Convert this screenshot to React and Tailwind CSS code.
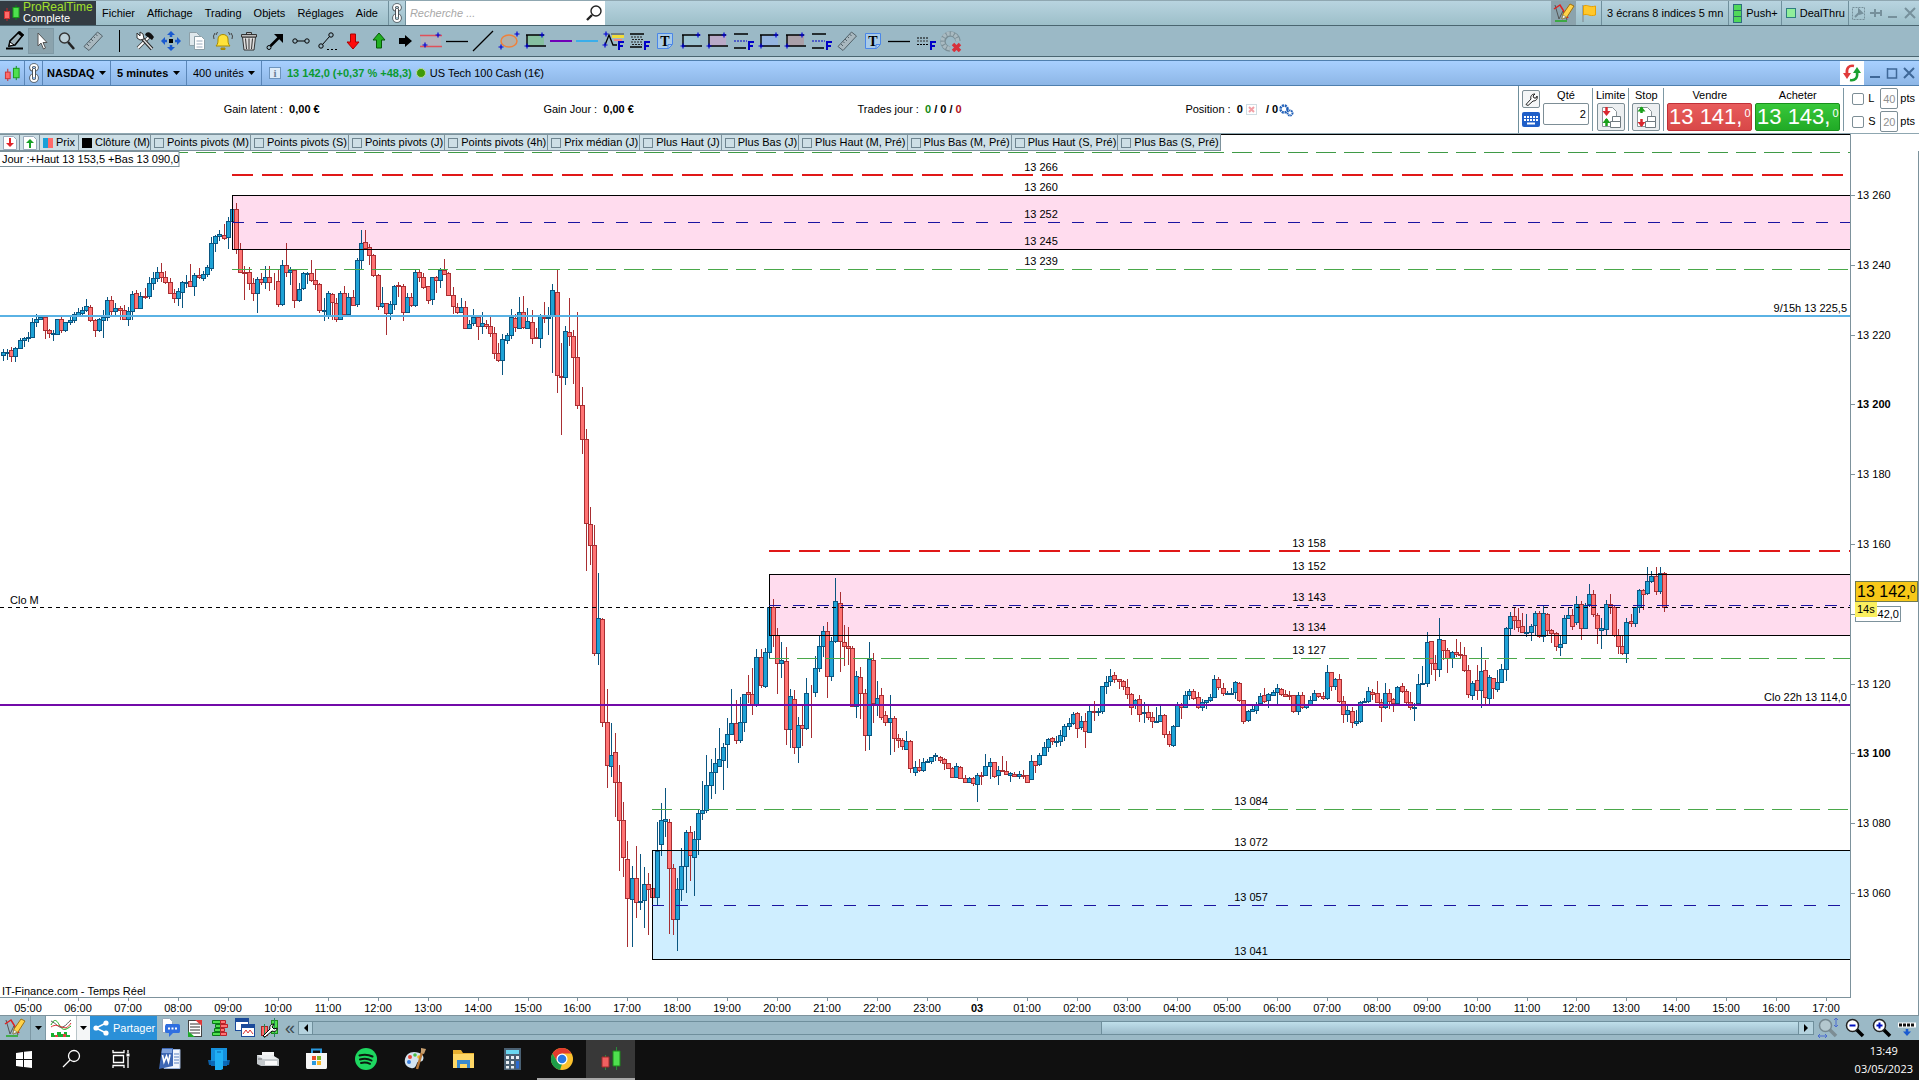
import React, { useState } from "react";

/* ---------- chart data ---------- */

// Each block: y origin, units per pixel, then rows of [high, open, close, low]
const BLOCKS = [
  {
    base: 180,
    unit: 3,
    rows: [
      [508,524,516,542],[508,518,516,540],[500,511,529,545],[502,529,505,545],[474,505,481,508],[470,481,474,500],
      [455,473,470,485],[415,472,427,474],[402,427,418,440],[408,418,411,420],[408,411,451,476],[448,451,460,475],
      [450,461,459,482],[418,463,418,464],[410,418,451,458],[425,449,427,455],[405,427,420,435],[397,421,402,430],
      [385,404,397,410],[380,398,391,405],[357,390,379,395],[375,381,421,425],[418,421,451,470],[415,451,418,455],
      [391,421,411,473],[352,411,361,424],[348,361,394,404],[370,394,385,405],[379,385,391,420],[376,391,418,420],
      [381,418,394,437],[334,394,343,420],[331,340,385,388],[337,384,349,386],[324,348,350,358],[291,349,310,357],
      [276,310,295,330],[261,295,277,305],[249,277,292,305],[274,292,307,312],[295,307,338,341],[326,338,355,368],
      [324,355,334,379],[303,335,307,384],[285,309,305,324],[252,304,319,322],[280,317,286,348],[265,286,292,297],
      [274,295,283,302],[255,283,262,290],[172,265,190,273],[165,188,169,215],[150,169,163,184],[133,166,175,181],
      [110,172,124,207],[88,124,88,208],[69,88,208,221],[189,208,277,280],[258,275,278,359],[261,277,310,330],
      [295,310,340,363],[292,340,298,398],[280,298,307,315],[258,307,292,327],[259,292,307,332],[280,304,303,330],
      [270,304,373,380],[239,373,256,378],[189,256,277,290],[262,277,271,316],[268,271,361,384],[310,361,328,365],
      [277,325,280,330],[277,282,280,312],[240,280,301,305],[268,300,313,330],[310,313,391,400],[355,392,390,423],
      [334,404,340,417],[340,343,367,420],[355,370,418,425],[332,417,340,420],[318,340,403,410],[340,403,352,405],
      [330,352,376,379],[235,373,241,380],[150,241,190,267],[150,187,205,207],[192,202,226,256],[222,226,286,290],
      [283,286,379,390],[321,379,370,385],[369,370,400,465],[363,400,373,419],[315,373,318,390],[305,316,319,350],
      [312,319,397,423],[340,397,352,400],[340,352,376,382],[268,376,277,382],[267,277,291,306],[280,291,322,326],
      [318,319,361,373],[290,358,292,375],[289,292,301,340],[265,301,271,323],[237,271,281,286],[276,280,346,348],
      [321,346,379,402],[370,381,397,403],[354,397,382,400],[363,382,445,448],[420,445,433,448],[388,430,411,437],
      [406,411,439,480],[396,439,430,462],[420,433,439,448],[409,439,460,470],[440,460,520,537],[489,520,539,545],
      [461,541,478,584],[460,481,466,492],[388,466,411,476],[403,413,442,456],[351,445,397,448],[348,397,442,448],
      [384,443,424,444],[390,427,473,491],[445,472,475,478],[403,475,408,503],[366,410,414,428],[380,413,411,465],
    ],
  },
  {
    base: 260,
    unit: 2.24,
    rows: [
      [54,125,67,252],[22,72,257,298],[187,259,263,391],[147,263,160,281],[85,162,171,192],[157,170,218,277],
      [116,218,324,333],[285,324,402,434],[379,402,590,696],[553,592,639,684],[594,639,881,888],[701,881,803,908],
      [803,805,1035,1047],[962,1034,1132,1182],[1037,1134,1108,1159],[1060,1103,1170,1247],[1131,1170,1255,1368],
      [1214,1255,1338,1381],[1301,1341,1430,1540],[1357,1432,1385,1540],[1313,1385,1439,1475],[1331,1438,1436,1457],
      [1360,1434,1397,1496],[1373,1397,1408,1513],[1403,1406,1426,1428],[1259,1428,1324,1448],[1216,1309,1255,1336],
      [1183,1256,1253,1292],[1252,1258,1361,1509],[1352,1361,1477,1511],[1384,1477,1410,1547],[1318,1408,1358,1435],
      [1277,1358,1282,1417],[1268,1282,1332,1390],[1280,1338,1298,1424],[1231,1296,1238,1332],[1167,1238,1233,1254],
      [1109,1231,1175,1238],
    ],
  },
  {
    base: 540,
    unit: 3,
    rows: [
      [657,736,697,777],[625,697,670,762],[564,679,658,682],[610,661,622,749],[534,613,583,684],[447,583,550,585],
      [480,550,601,612],[472,601,547,609],[462,545,463,575],[405,457,463,490],[384,463,493,524],[327,493,352,500],
      [328,352,436,444],[325,439,337,444],[200,337,202,353],[177,202,285,322],[263,284,370,461],[306,370,361,413],
      [321,364,568,614],[448,566,469,623],[451,478,622,641],[530,622,556,668],[496,556,565,618],[414,565,460,570],
      [435,457,455,593],[349,457,385,472],[287,385,319,395],[259,319,274,350],[247,274,409,473],[292,409,304,422],
      [114,304,184,310],[156,190,304,395],[256,307,319,377],[261,319,325,375],[317,325,499,500],[394,499,409,533],
      [380,412,460,536],[448,460,586,632],[306,586,358,629],[339,361,490,549],[423,491,475,527],[445,466,532,540],
      [513,526,547,557],[465,547,535,644],[529,535,595,635],[582,595,601,624],[593,601,617,629],[573,628,604,628],
      [601,604,685,698],[664,697,682,707],[658,682,691,697],[655,691,667,697],[658,667,664,670],[650,664,652,671],
      [640,649,646,662],[648,652,661,668],[655,658,670,690],[668,670,685,688],[682,685,712,714],[670,710,679,712],
      [679,682,714,717],[706,715,727,729],[712,727,715,729],[710,715,730,737],[698,733,706,785],[695,705,708,735],
      [642,706,679,708],[653,679,667,716],[665,667,709,713],[679,706,691,735],[648,691,694,697],[663,694,703,706],
      [695,706,700,727],[697,703,709,712],[694,707,703,718],[691,705,709,716],[705,706,727,729],[645,718,664,720],
      [663,664,674,698],[640,673,646,678],[607,646,622,648],[595,622,598,635],[590,595,604,616],[588,605,603,622],
      [569,604,586,618],[552,589,559,603],[534,559,550,570],[515,550,522,555],[516,520,565,594],
    ],
  },
  {
    base: 640,
    unit: 3,
    rows: [
      [228,261,244,270],[218,244,274,323],[198,277,213,280],[183,213,216,243],[205,217,214,229],[138,214,139,222],
      [109,139,127,162],[87,124,109,138],[97,106,118,130],[118,118,124,148],[120,124,139,150],[117,142,163,178],
      [160,163,202,226],[178,192,181,207],[164,178,223,245],[185,219,216,248],[197,217,231,241],[215,231,244,265],
      [201,246,243,248],[198,244,226,245],[222,226,283,293],[273,283,312,320],[255,316,259,321],[187,259,192,262],
      [190,192,202,237],[154,202,166,204],[147,166,154,181],[148,154,174,181],[157,172,202,206],[178,202,187,213],
      [180,186,181,207],[163,181,172,187],[106,172,118,175],[110,118,142,150],[129,145,160,168],[154,162,160,165],
      [145,161,159,163],[124,157,127,177],[126,130,181,187],[180,181,244,252],[211,241,213,246],[196,213,207,214],
      [187,210,195,222],[160,190,169,197],[145,166,184,190],[158,181,163,203],[150,166,157,169],[133,157,145,194],
      [144,148,163,168],[150,163,169,170],[154,165,168,180],[166,166,214,218],[156,212,166,224],[157,166,202,206],
      [196,202,195,206],[168,192,181,196],[150,181,160,184],[158,160,169,175],[156,169,175,181],[75,175,97,181],
      [96,97,139,153],[114,139,118,151],[103,118,184,190],[168,184,222,248],[196,222,210,246],[202,213,247,263],
      [210,250,243,258],[184,244,187,248],[175,187,184,188],[141,184,154,188],[147,156,162,180],[124,160,187,190],
      [176,187,202,245],[129,202,160,208],[147,160,184,208],[175,178,190,215],[138,190,142,195],[130,139,154,160],
      [148,154,187,193],[157,187,202,209],[188,204,200,242],
    ],
  },
  {
    base: 540,
    unit: 3,
    rows: [
      [402,490,433,497],[378,431,429,433],[276,430,307,440],[303,304,370,404],[345,370,388,423],[234,388,298,410],
      [300,301,331,360],[324,331,355,399],[334,355,337,384],[296,337,343,351],[306,343,346,356],[321,346,391,396],
      [374,391,463,473],[424,466,430,479],[375,421,451,480],[321,451,394,503],[361,391,472,494],[406,475,412,491],
      [414,415,445,478],[390,448,427,456],[371,427,388,430],[262,388,265,424],[217,265,229,285],[203,229,241,269],
      [204,241,262,275],[220,259,277,280],[223,278,276,291],[252,277,259,302],[214,256,220,285],[213,220,289,293],
      [196,289,220,305],[220,223,271,284],[267,271,280,308],[277,280,319,332],[287,322,313,348],[226,310,235,312],
      [203,235,226,238],[206,226,259,270],[168,247,193,254],[183,193,265,299],[188,265,194,268],[132,193,163,200],
      [151,163,223,232],[220,226,265,313],[235,271,265,326],[180,268,193,286],[162,193,200,222],[198,202,286,290],
      [268,286,319,341],[285,319,340,345],[234,340,247,369],[223,244,250,262],[202,250,202,261],[148,202,151,219],
      [147,151,163,209],[82,160,124,165],[93,124,109,128],[81,109,154,164],[81,154,100,163],[97,100,202,215],
    ],
  },
];

const candles = BLOCKS.flatMap(({ base, unit, rows }) =>
  rows.map((row) => row.map((v) => Math.round(base + v / unit)))
).map(([high, open, close, low], i) => ({ x: Math.round(3 + i * 4.1625), high, open, close, low }));

const levelLabels = [
  [1041, 167, "13 266"], [1041, 187, "13 260"], [1041, 214, "13 252"], [1041, 241, "13 245"], [1041, 261, "13 239"],
  [1309, 543, "13 158"], [1309, 566, "13 152"], [1309, 597, "13 143"], [1309, 627, "13 134"], [1309, 650, "13 127"],
  [1251, 801, "13 084"], [1251, 842, "13 072"], [1251, 897, "13 057"], [1251, 951, "13 041"],
];

const prices = [13260, 13240, 13220, 13200, 13180, 13160, 13140, 13120, 13100, 13080, 13060];
const priceY = (i) => Math.round(195 + i * 69.8);
const hours = Array.from({ length: 37 }, (_, i) => (5 + i) % 24);

const legend = [
  "Points pivots (M)", "Points pivots (S)", "Points pivots (J)", "Points pivots (4h)", "Prix médian (J)",
  "Plus Haut (J)", "Plus Bas (J)", "Plus Haut (M, Pré)", "Plus Bas (M, Pré)", "Plus Haut (S, Pré)", "Plus Bas (S, Pré)",
];

/* ---------- icons ---------- */

const Ico = ({ w = 22, h = 22, children }) => (
  <svg width={w} height={h} viewBox={`0 0 ${w} ${h}`} fill="none" className="block shrink-0">{children}</svg>
);

const Candles = ({ s = 18 }) => (
  <svg width={s} height={s} viewBox="0 0 18 18" className="block shrink-0">
    <path d="M4 4v13" stroke="#c22" />
    <rect x="1.5" y="7.5" width="5" height="7" fill="#ff6a6a" stroke="#c33" />
    <path d="M13 1v15" stroke="#0a8a1a" />
    <rect x="10" y="3.5" width="6" height="10" fill="#4fe04f" stroke="#1a9a1a" />
  </svg>
);

const Chain = () => (
  <Ico w={12} h={22}>
    {["M6 3c-4 0-4 5 0 5s4-5 0-5z", "M6 13c-4 0-4 6 0 6s4-6 0-6z"].map((d) => (
      <g key={d}>
        <path d={d} stroke="#4c5358" strokeWidth="3.600" />
        <path d={d} stroke="#fff" strokeWidth="1.800" />
      </g>
    ))}
    <path d="M6 7v8" stroke="#4c5358" strokeWidth="4" />
    <path d="M6 7v8" stroke="#fff" strokeWidth="2" />
  </Ico>
);

const Caret = () => (
  <svg width="7" height="4" viewBox="0 0 7 4" className="shrink-0"><path d="M0 0h7L3.500 4z" fill="#000" /></svg>
);

const Plus = ({ x, y }) => <path d={`M${x - 2.5} ${y}h5M${x} ${y - 2.5}v5`} stroke="#0000d8" strokeWidth="1.2" />;
const F = () => <path d="M17 20v-8h5M17 16h4" stroke="#0000c8" strokeWidth="2" />;

const Zone = ({ fill, line = "#000" }) => (
  <>
    <rect x="3" y="5" width="17" height="11" fill={fill} />
    <path d="M2 5h18M2 16h20M3 5v11" stroke={line} strokeWidth="1.4" />
    <Plus x={3} y={16} />
    <Plus x={18} y={5} />
  </>
);

const Note = () => (
  <>
    <path d="M3.500 3.500h15v11l-4 4h-11z" fill="#a9cbe8" stroke="#4a86e8" />
    <path d="M18 14.500h-4v4" stroke="#4a86e8" />
    <text x="11" y="16" textAnchor="middle" fill="#000" className="font-['Liberation_Serif',serif] text-[14px] font-bold">T</text>
  </>
);

const Ruler = () => (
  <>
    <path d="M2 16.500 15.500 2l5 4L7 20.500z" fill="#a9b8bf" stroke="#52626a" />
    <path d="m5 14 2 2m0-4.500 1.500 1.500m.5-4 2 2m.5-4.500 1.500 1.500m.5-4 2 2" stroke="#52626a" />
  </>
);

const FibLevels = () => (
  <>
    <path d="M2 4h14M2 18h12" stroke="#000" strokeWidth="1.4" />
    <path d="M2 11h13" stroke="#0000c8" strokeDasharray="2 1" />
    <F />
  </>
);

const Magnifier = ({ sign, faded }) => (
  <Ico>
    <path d="m12 12 7 7" stroke={faded ? "#7d8d94" : "#000"} strokeWidth="3.500" />
    <circle cx="8.500" cy="8.500" r="6" fill={faded ? "#b4c8cf" : "#fff"} stroke={faded ? "#75878f" : "#222"} strokeWidth="1.500" />
    {sign && <path d={sign === "+" ? "M5.500 8.500h6M8.500 5.500v6" : "M5.500 8.500h6"} stroke="#0010c0" strokeWidth="2" />}
    {faded && <path d="M19 1v9m-2-7 2-2 2 2m-4 5 2 2 2-2M1 19h9M3 17l-2 2 2 2m5-4 2 2-2 2" stroke="#4a6ad0" />}
  </Ico>
);

const DrawPencil = () => (
  <Ico>
    <path d="m2 3 4 14 4-8 4 9" stroke="#555" strokeWidth="1" />
    <path d="m1 7 6-4 8 13" stroke="#d22" strokeWidth="1.500" />
    <path d="M2 19h12" stroke="#2a2" strokeWidth="1.500" />
    <path d="m9 17 1-5L17 2l4 2-7 11z" fill="#ffd34a" stroke="#a07010" />
    <path d="m9 17 1-4 3 2z" fill="#fff" stroke="#775" strokeWidth=".6" />
  </Ico>
);

const tools = [
  ["Dessiner", <><path d="m5 16 1-5L15 2l4 3-8 10z" fill="#9fb3bb" stroke="#000" strokeWidth="1.600" /><path d="m5 16 1-4 4 3z" fill="#fff" stroke="#000" /><path d="m13 3 5 4 2-2-4-4z" fill="#000" /><path d="M2 18.500h17" stroke="#000" strokeWidth="2" /></>],
  ["Pointeur", <path d="M8 3v13l3-3 2.500 6 2-1-2.500-5.500h4z" fill="#fff" stroke="#555" />],
  ["Loupe", <><path d="m12 12 6 7" stroke="#222" strokeWidth="2.600" /><circle cx="8.500" cy="8" r="5" fill="#bcd0d8" stroke="#333" strokeWidth="1.400" /></>],
  ["Règle", <Ruler />],
  null,
  ["Outils", <><path d="m4 18 11-11" stroke="#444" strokeWidth="3.500" /><path d="m4 18 11-11" stroke="#fff" strokeWidth="1.800" /><path d="m7 7 11 12" stroke="#222" strokeWidth="3.500" /><path d="m8 8 10 11" stroke="#ddd" strokeWidth="1.600" /><path d="M12 3c3-2 5 0 8 4l-2 3-7-5z" fill="#111" /><path d="M3 3v5l3 2 4-1-1-5-3-2v4z" fill="#fff" stroke="#333" /></>],
  ["Déplacer", <><path d="m11 1 4 4H7zM11 21l4-4H7zM1 11l4-4v8zM21 11l-4-4v8z" fill="#1a5ad0" /><path d="M5 11h2m8 0h2M11 5v2m0 8v2" stroke="#1a5ad0" strokeWidth="2.500" /><path d="M9 9h4v4H9z" fill="#000" /></>],
  ["Copier", <><path d="M3.500 2.500h7l3 3v10h-10z" fill="#dfe8ec" stroke="#8da0a8" /><path d="M8.500 6.500h7l3 3v10h-10z" fill="#fff" stroke="#8da0a8" /><path d="M10.500 11h6m-6 3h6m-6 3h6" stroke="#9ab" /></>],
  ["Alerte", <><path d="M4 16c2-2 2-4 2-7 0-6 10-6 10 0 0 3 0 5 2 7z" fill="#ffe23a" stroke="#a88a00" /><path d="M9 18h4v1.500H9z" fill="#c09000" stroke="#a88a00" /><path d="M3 3 1.500 6 2 9m17-6 1.500 3L20 9M5.500 2 4 5m12.500-3L18 5" stroke="#444" /></>],
  ["Supprimer", <><path d="M4.500 7h13l-1.500 13H6z" fill="#ddd" stroke="#333" /><path d="M3.500 4.500h15v2.500h-15zM8.500 2.500h5v2h-5z" fill="#bbb" stroke="#333" /><path d="M7.500 8.500 8.500 19m2.500-10.500V19m3.500-10.500L13.500 19" stroke="#333" /></>],
  ["Flèche", <><circle cx="5" cy="17.500" r="2" stroke="#000" /><path d="m6.500 16 9-9" stroke="#000" strokeWidth="2.600" /><path d="M10 4h9v9z" fill="#000" /></>],
  ["Segment", <><circle cx="5" cy="11" r="2.200" stroke="#000" /><circle cx="17" cy="11" r="2.200" stroke="#000" /><path d="M7 11h8" stroke="#000" /></>],
  ["Droite prolongée", <><circle cx="5" cy="16" r="2.200" stroke="#000" /><circle cx="15" cy="5" r="2.200" stroke="#000" /><path d="m6.500 14.500 7-8" stroke="#000" /><path d="M11 19.500h11" stroke="#000" strokeDasharray="2 2" /></>],
  ["Baisse", <path d="M8.500 4h5v8h3.500l-6 7-6-7h3.500z" fill="#ff0a0a" stroke="#a00" />],
  ["Hausse", <path d="M8.500 18h5v-8h3.500l-6-7-6 7h3.500z" fill="#22b022" stroke="#075a07" />],
  ["Droite", <path d="M5 8h6V5l7 6-7 6v-3H5z" fill="#000" />],
  ["Zone rouge", <><rect x="1" y="6" width="20" height="10" fill="#b0b4be" /><path d="M0 5.500h22M0 16.500h22" stroke="#e0505a" strokeWidth="1.400" /><Plus x={5} y={15} /><Plus x={18} y={5} /></>],
  ["Ligne horizontale", <path d="M0 11.500h22" stroke="#000" strokeWidth="1.300" />],
  ["Ligne", <path d="M1 21 21 1" stroke="#000" strokeWidth="1.300" />],
  ["Ellipse", <><ellipse cx="11" cy="11" rx="8" ry="6" fill="#b3b1a9" stroke="#f0803a" strokeWidth="1.500" /><Plus x={3} y={17} /><Plus x={19} y={4} /></>],
  ["Zone verte", <Zone fill="#86c0a0" />],
  ["Ligne violette", <path d="M0 11h22" stroke="#7000b8" strokeWidth="2" />],
  ["Ligne bleue", <path d="M0 11h22" stroke="#3aaeea" strokeWidth="2" />],
  ["Fibonacci tendance", <><path d="m3 15 4-10 4 10h4" stroke="#000" strokeWidth="1.300" /><path d="M9 4h13" stroke="#444" /><path d="M10 6.500h12" stroke="#f0dc3a" strokeWidth="3" /><path d="M12 10h8" stroke="#e88" strokeWidth="2" /><Plus x={4} y={4} /><Plus x={3} y={15} /><F /></>],
  ["Fibonacci", <><path d="M2 4h14M2 17h12" stroke="#000" strokeWidth="1.400" /><path d="M3 7h12M4 9.500h11M3 12h12M4 14.500h10" stroke="#222" strokeDasharray="2 1" /><F /></>],
  ["Texte", <Note />],
  ["Zone bleue", <Zone fill="#9dc4d2" />],
  ["Zone rose", <Zone fill="#baaac8" />],
  ["Niveaux", <FibLevels />],
  ["Zone bleue 2", <Zone fill="#94b4e0" />],
  ["Zone brune", <Zone fill="#aaa0a8" />],
  ["Niveaux 2", <FibLevels />],
  ["Règle 2", <Ruler />],
  ["Texte 2", <Note />],
  ["Ligne horizontale 2", <path d="M0 11.500h22" stroke="#000" strokeWidth="1.300" />],
  ["Niveaux 3", <><path d="M3 8h12M3 14.500h11" stroke="#000" strokeDasharray="2 1" /><path d="M3 11h12" stroke="#333" strokeDasharray="2 1" /><F /></>],
  ["Effacer", <><path d="M18 11a7.500 7.500 0 1 0-8 8" stroke="#7b8f97" strokeWidth="5.500" /><path d="M17.500 11a7.500 7.500 0 1 0-7.500 7.500" stroke="#a9bac1" strokeWidth="3.800" strokeDasharray="3 1" /><path d="m13 14 7 7m0-7-7 7" stroke="#d8303a" strokeWidth="3.500" /></>],
];

/* ---------- top bars ---------- */

const TopMenu = () => (
  <header className="flex h-[26px] items-stretch border-t border-b border-t-[#8fa7b1] border-b-[#4a6570] bg-linear-to-b from-[#b8d4e0] to-[#9dbfc9]">
    <div className="flex w-24 items-center gap-[2px] bg-[#333b42] pl-[3px]">
      <Candles />
      <div className="text-[12px] leading-[11px]">
        <div className="text-[#a0e02c]">ProRealTime</div>
        <div className="text-[11px] text-white">Complete</div>
      </div>
    </div>
    <nav className="flex items-center gap-3 px-[6px]">
      {["Fichier", "Affichage", "Trading", "Objets", "Réglages", "Aide"].map((m) => (
        <button key={m} type="button">{m}</button>
      ))}
    </nav>
    <div className="ml-1 flex w-[18px] items-center justify-center border-x border-[#6f8f9c]"><Chain /></div>
    <div className="flex w-[199px] items-center bg-white pr-[2px] pl-1">
      <input type="text" placeholder="Recherche ..." aria-label="Recherche" className="w-full italic outline-none placeholder:text-[#a8a8a8]" />
      <svg width="18" height="18" viewBox="0 0 18 18" fill="none" className="shrink-0">
        <circle cx="11" cy="7" r="5" stroke="#222" strokeWidth="1.400" />
        <path d="m7 11-5 5" stroke="#222" strokeWidth="2.400" />
      </svg>
    </div>
    <div className="ml-auto flex items-stretch">
      <button type="button" aria-label="Dessin" className="flex w-[25px] items-center justify-center bg-[#8ba3ad]"><DrawPencil /></button>
      <button type="button" aria-label="Drapeau" className="flex w-[25px] items-center justify-center">
        <Ico>
          <path d="M5 3v17" stroke="#8a9aa0" strokeWidth="1.500" />
          <path d="M5.500 4c4-2 6 2 12 0v9c-6 2-8-2-12 0z" fill="#ffc82a" stroke="#e8a000" />
        </Ico>
      </button>
      <button type="button" className="border-l border-[#6f8f9c] px-[5px]">3 écrans 8 indices 5 mn</button>
      <button type="button" className="flex items-center gap-1 border-l border-[#6f8f9c] pr-[3px] pl-1">
        <span className="flex h-[19px] w-[9px] flex-col divide-y divide-[#2f6f5f] border border-[#2f6f7f] bg-[#50d85a]">
          <span className="flex-1" /><span className="flex-1" /><span className="flex-1" />
        </span>
        Push+
      </button>
      <button type="button" className="flex items-center gap-1 border-l border-[#6f8f9c] pr-[3px] pl-1">
        <span className="h-[10px] w-[10px] border border-[#2f7f7f] bg-[#90ee9a]" />
        DealThru
      </button>
      <div className="flex w-[71px] items-center justify-around border-l border-[#6f8f9c] text-[#76909b]">
        <Ico w={13} h={13}><rect x=".5" y=".5" width="12" height="12" stroke="#76909b" strokeDasharray="2 1" /><path d="m3 10 4-4m0 0V3l3 3-3 1" stroke="#76909b" strokeWidth="2" /></Ico>
        <Ico w={12} h={12}><path d="M0 6h5M5 2v8M5 6h6M11 3v6" stroke="#76909b" strokeWidth="2" /></Ico>
        <Ico w={12} h={12}><path d="M1 10h9" stroke="#76909b" strokeWidth="2" /></Ico>
        <Ico w={12} h={12}><path d="m1 1 10 10M11 1 1 11" stroke="#76909b" strokeWidth="2" /></Ico>
      </div>
    </div>
  </header>
);

const DrawingBar = () => (
  <div className="flex h-[31px] items-center border-b border-[#4a6570] bg-[#9bb9c6] pl-[2px]">
    {tools.map((t, i) =>
      t ? (
        <button
          key={i}
          type="button"
          title={t[0]}
          aria-label={t[0]}
          className={`flex h-[26px] w-[26px] items-center justify-center ${i === 1 ? "border border-[#7f9aa6] bg-[#8ba3ad]" : ""}`}
        >
          <Ico>{t[1]}</Ico>
        </button>
      ) : (
        <span key={i} className="flex w-[26px] justify-center"><span className="h-[22px] w-px bg-black" /></span>
      )
    )}
  </div>
);

const Drop = ({ name, value, className }) => (
  <label className={`flex items-center gap-1 border-r border-[#5a86b8] ${className}`}>
    <select aria-label={name} className="appearance-none bg-transparent outline-none">
      <option>{value}</option>
    </select>
    <Caret />
  </label>
);

const TitleBar = () => (
  <div className="border-t-[3px] border-[#c4dae4]">
    <div className="flex h-[26px] items-stretch border-y border-[#4f7fae] bg-linear-to-b from-[#a8d0ff] to-[#8db6e6]">
      <div className="flex w-6 items-center justify-center"><Candles s={17} /></div>
      <div className="flex w-[19px] items-center justify-center border-x border-[#5a86b8]"><Chain /></div>
      <Drop name="Valeur" value="NASDAQ" className="px-1 font-bold" />
      <Drop name="Unité de temps" value="5 minutes" className="px-[6px] font-bold" />
      <Drop name="Nombre d'unités" value="400 unités" className="px-[6px]" />
      <div className="flex items-center gap-1 pl-[7px]">
        <span className="mr-[2px] flex h-3 w-3 items-center justify-center border border-[#6d94bd] bg-[#dcebf8] font-['Liberation_Serif',serif] text-[11px] leading-none font-bold text-[#6a8098]">i</span>
        <span className="font-bold text-[#0a9a30]">13 142,0 (+0,37 % +48,3)</span>
        <span className="h-[10px] w-[10px] rounded-full border border-[#b8dc9a] bg-[#3f9a0a]" />
        <span>US Tech 100 Cash (1€)</span>
      </div>
      <div className="ml-auto flex items-stretch">
        <button type="button" aria-label="Actualiser" className="flex w-6 items-center justify-center bg-white">
          <Ico w={20} h={20}>
            <path d="M12 3C7 2 4 5 5 11" stroke="#e03a3a" strokeWidth="2.600" />
            <path d="M1 10h8l-4 6z" fill="#e03a3a" />
            <path d="M8 17c5 1 8-2 7-8" stroke="#1aa030" strokeWidth="2.600" />
            <path d="M11 10h8l-4-6z" fill="#1aa030" />
          </Ico>
        </button>
        <div className="flex w-[55px] items-center justify-around px-[2px]">
          <Ico w={12} h={12}><path d="M1 10h10" stroke="#3f6898" strokeWidth="2" /></Ico>
          <Ico w={12} h={12}><path d="M1.500 1v10h9V2h-9" stroke="#3f6898" strokeWidth="1.500" /></Ico>
          <Ico w={12} h={12}><path d="m1 1 10 10M11 1 1 11" stroke="#3f6898" strokeWidth="2" /></Ico>
        </div>
      </div>
    </div>
  </div>
);

/* ---------- trading panel ---------- */

const OrderIcon = ({ flip }) => (
  <Ico w={24} h={24}>
    <path d="M3.500 2.500h10l4 4v15h-14z" fill="#fff" stroke="#8a9499" />
    <path d="M7.500 2v6" stroke={flip ? "#1aa01a" : "#d8282f"} strokeWidth="2.500" />
    <path d={flip ? "M3.500 6.500h8l-4-5z" : "M3.500 6h8l-4 5z"} fill={flip ? "#1aa01a" : "#d8282f"} />
    <path d="M7.500 14v7" stroke={flip ? "#d8282f" : "#1aa01a"} strokeWidth="2.500" />
    <path d={flip ? "M3.500 17h8l-4 5z" : "M3.500 18h8l-4-5z"} fill={flip ? "#d8282f" : "#1aa01a"} />
    <path d="M13.500 11.500h8v5h-8zM11.500 16.500h10v6h-10z" fill="#fff" stroke="#6f7a80" />
  </Ico>
);

const Order = ({ label, flip }) => (
  <div className="flex flex-col items-center gap-[1px] border-r border-[#7d98a4] px-[3px]">
    <span className="leading-[14px]">{label}</span>
    <button type="button" aria-label={label} className="flex h-7 w-7 items-center justify-center rounded-[2px] border border-[#7d8e96] bg-[#eceff1]">
      <OrderIcon flip={flip} />
    </button>
  </div>
);

const Deal = ({ label, price, tone }) => (
  <div className="flex flex-col items-center gap-[1px]">
    <span className="leading-[14px]">{label}</span>
    <button type="button" aria-label={`${label} ${price}0`} className={`flex h-7 w-[85px] justify-center rounded-[2px] border text-[22px] leading-[26px] text-white ${tone}`}>
      <span>{price}</span>
      <span className="self-start pt-1 pl-[2px] text-[11px] leading-[11px]">0</span>
    </button>
  </div>
);

const Protect = ({ letter, value }) => (
  <div className="flex items-center">
    <label className="flex w-[28px] items-center gap-1">
      <input type="checkbox" className="h-3 w-3 appearance-none rounded-[2px] border border-[#7d8e96] bg-white" />
      {letter}
    </label>
    <input type="text" aria-label={`Points ${letter}`} defaultValue={value} className="h-[21px] w-[18px] rounded-[2px] border border-[#7d8e96] text-center text-[#909090]" />
    <span className="pl-[2px]">pts</span>
  </div>
);

const AccountBar = () => {
  const [qty, setQty] = useState("2");
  return (
    <div className="flex h-12 items-stretch border-b border-[#8fa7b1]">
      <div className="flex flex-1 items-center justify-evenly">
        <span>Gain latent :&nbsp; <b>0,00 €</b></span>
        <span>Gain Jour :&nbsp; <b>0,00 €</b></span>
        <span>Trades jour :&nbsp; <b><span className="text-[#128a12]">0</span> / 0 / <span className="text-[#b01020]">0</span></b></span>
        <span className="flex items-center">
          Position :&nbsp;&nbsp;<b>0</b>
          <span className="mx-[3px] flex h-[11px] w-[11px] items-center justify-center border border-[#cfdce2]">
            <Ico w={7} h={7}><path d="m1 1 5 5M6 1 1 6" stroke="#f2a0a6" strokeWidth="2" /></Ico>
          </span>
          <b>&nbsp;&nbsp;/ 0</b>
          <Ico w={16} h={14}>
            <circle cx="6" cy="6" r="3.500" stroke="#1f5fb8" strokeWidth="2.500" strokeDasharray="2 .8" />
            <circle cx="12" cy="10" r="2.500" stroke="#1f5fb8" strokeWidth="2" strokeDasharray="1.500 .6" />
          </Ico>
        </span>
      </div>
      <div className="flex items-start border-l border-[#6f8f9c] pt-[2px] pl-[3px]">
        <div className="flex flex-col gap-1 pt-[2px]">
          <button type="button" aria-label="Réglages trading" className="flex h-[18px] w-[18px] items-center justify-center rounded-[2px] border border-[#7d8e96] bg-[#f4f6f7]">
            <Ico w={14} h={14}><path d="M2 12.500 7 7c-1-3 1-5 4-5L9 4l1 2 2 0 1-2c1 3-1 5-4 5l-5 4.500z" fill="#fff" stroke="#222" /></Ico>
          </button>
          <button type="button" aria-label="Clavier" className="flex h-[15px] w-[18px] items-center justify-center rounded-[2px] bg-[#1f5fc8]">
            <Ico w={14} h={10}><path d="M0 2h14M0 5h14" stroke="#fff" strokeWidth="2" strokeDasharray="2 1" /><path d="M3 8.500h8" stroke="#fff" strokeWidth="2" /></Ico>
          </button>
        </div>
        <div className="flex flex-col items-center gap-[1px] border-r border-[#7d98a4] px-[3px] pb-[6px]">
          <label htmlFor="qty" className="leading-[14px]">Qté</label>
          <input id="qty" type="text" value={qty} onChange={(e) => setQty(e.target.value)} className="h-[22px] w-[46px] rounded-[2px] border border-[#7d8e96] px-[2px] text-right" />
        </div>
        <Order label="Limite" />
        <Order label="Stop" flip />
        <div className="flex gap-[3px] border-r border-[#7d98a4] px-[3px]">
          <Deal label="Vendre" price="13 141," tone="border-[#c03038] bg-linear-to-b from-[#e85c5c] to-[#d84848]" />
          <Deal label="Acheter" price="13 143," tone="border-[#18901c] bg-linear-to-b from-[#38c83a] to-[#20aa26]" />
        </div>
        <div className="flex flex-col gap-[2px] pr-1 pl-2">
          <Protect letter="L" value="40" />
          <Protect letter="S" value="20" />
        </div>
      </div>
    </div>
  );
};

/* ---------- chart ---------- */

const LegendBar = () => (
  <div className="flex h-[17px]">
    <div className="flex items-stretch divide-x divide-[#7d929c] border-t border-r border-b border-[#7d929c] bg-[#cddfe6]">
      {["#e0242a", "#18a028"].map((c, i) => (
        <button key={c} type="button" aria-label={i ? "Monter" : "Descendre"} className="flex w-5 items-center justify-center">
          <Ico w={14} h={14}>
            <path d="M.5.5h10l3 3v10H.5z" fill="#fff" stroke="#9ab" />
            <path d={i ? "M7 12V5" : "M7 2v7"} stroke={c} strokeWidth="2" />
            <path d={i ? "M3 7l4-4 4 4z" : "M3 7l4 4 4-4z"} fill={c} />
          </Ico>
        </button>
      ))}
      <span className="flex items-center gap-[3px] px-[3px]">
        <span className="flex h-[10px] w-[10px]"><span className="flex-1 bg-[#1aa0d8]" /><span className="flex-1 bg-[#ff6a6a]" /></span>
        Prix
      </span>
      <span className="flex items-center gap-[3px] pl-[3px]"><span className="h-[10px] w-[10px] bg-black" />Clôture (M)</span>
      {legend.map((l) => (
        <label key={l} className="flex items-center gap-[3px] pr-px pl-[3px] whitespace-nowrap">
          <input type="checkbox" className="h-[10px] w-[10px] appearance-none border border-[#6f8590]" />
          {l}
        </label>
      ))}
    </div>
    <div className="flex-1 border-t border-black" />
    <div className="w-[69px] border-l border-[#7d929c]" />
  </div>
);

const Level = ({ x = 0, y, color, dash, w = 1 }) => (
  <path d={`M${x} ${w === 1 ? y + 0.5 : y}H1850`} stroke={color} strokeWidth={w} strokeDasharray={dash} />
);

const PriceChart = () => (
  <svg viewBox="0 151 1919 865" className="block h-auto w-full" fill="none">
    <g shapeRendering="crispEdges">
      <rect x="232" y="195" width="1618" height="54" fill="#ffdcee" />
      <rect x="769" y="574" width="1081" height="61" fill="#ffdcee" />
      <rect x="652" y="850" width="1198" height="109" fill="#cfeeff" />

      {candles.map(({ x, high, open, close, low }, i) => {
        const up = close < open;
        const line = up ? "#0a5580" : "#a82e32";
        const top = Math.min(open, close);
        return (
          <g key={i} stroke={line}>
            <path d={`M${x + 0.5} ${high}V${low}`} />
            <rect x={x - 1.5} y={top + 0.5} width="4" height={Math.abs(open - close)} fill={up ? "#1ea2d6" : "#ff7474"} />
          </g>
        );
      })}

      <path d="M1850 195.500H232.500V249.500H1850M1850 574.500H769.500V635.500H1850M1850 850.500H652.500V959.500H1850" stroke="#000" />
      <Level y={152} color="#3f9a46" dash="20 8" />
      <Level x={232} y={175} color="#e01818" dash="21 9" w={2} />
      <Level x={232} y={222} color="#1a14a0" dash="12 12" />
      <Level x={232} y={269} color="#4aa84a" dash="20 8" />
      <Level y={316} color="#5ab2e4" w={2} />
      <Level x={769} y={551} color="#e01818" dash="21 9" w={2} />
      <Level x={769} y={605} color="#1a14a0" dash="12 12" />
      <Level y={607} color="#000" dash="4 4" />
      <Level x={769} y={658} color="#4aa84a" dash="20 8" />
      <Level y={705} color="#720aa8" w={2} />
      <Level x={652} y={809} color="#4aa84a" dash="20 8" />
      <Level x={652} y={905} color="#1a14a0" dash="12 12" />

      {/* axes */}
      <path d="M1850.500 151V997.500H0M0 1015.500H1919M1918.500 151V1015" stroke="#7d929c" />
      {prices.map((p, i) => <path key={p} d={`M1851 ${priceY(i) + 0.5}h4`} stroke="#7d929c" />)}
      {hours.map((h, i) => <path key={i} d={`M${Math.round(28 + i * 49.95) + 0.5} 998v3`} stroke="#7d929c" />)}
    </g>

    <g fill="#000" className="text-[11px]">
      {/* 13 140 sits under the last price tags */}
      {prices.map((p, i) => p !== 13140 && (
        <text key={p} x="1857" y={priceY(i) + 4} className={p % 100 === 0 ? "font-bold" : ""}>
          {`13 ${String(p % 1000).padStart(3, "0")}`}
        </text>
      ))}
      {hours.map((h, i) => (
        <text key={i} x={Math.round(28 + i * 49.95)} y="1012" textAnchor="middle" className={h === 0 ? "font-bold" : ""}>
          {h === 0 ? "03" : `${String(h).padStart(2, "0")}:00`}
        </text>
      ))}
      {levelLabels.map(([x, y, t]) => <text key={t} x={x} y={y + 4} textAnchor="middle">{t}</text>)}
      <text x="1847" y="312" textAnchor="end">9/15h 13 225,5</text>
      <text x="1847" y="701" textAnchor="end">Clo 22h 13 114,0</text>
      <text x="10" y="604">Clo M</text>
      <text x="2" y="995">IT-Finance.com - Temps Réel</text>

      <rect x="-1" y="151.500" width="180" height="15" fill="#fff" stroke="#7d929c" />
      <text x="2" y="163">Jour :+Haut 13 153,5 +Bas 13 090,0</text>
    </g>

    {/* last price tags */}
    <rect x="1855.500" y="606.500" width="45" height="15" fill="#fff" stroke="#7d929c" />
    <text x="1899" y="618" textAnchor="end" fill="#000" className="text-[11px]">42,0</text>
    <rect x="1855.500" y="581.500" width="62" height="20" fill="#f8c818" stroke="#6f7a50" />
    <text x="1857" y="597" fill="#000" className="text-[16px]">13 142,</text>
    <text x="1910" y="593" fill="#000" className="text-[10px]">0</text>
    <rect x="1855" y="602" width="22" height="15" fill="#fbf060" />
    <text x="1857" y="613" fill="#000" className="text-[11px]">14s</text>
  </svg>
);

const ChartFooter = () => (
  <div className="flex h-6 items-stretch bg-[#9bb9c6]">
    <button type="button" aria-label="Dessin" className="flex w-[30px] items-center justify-center"><DrawPencil /></button>
    <button type="button" aria-label="Options de dessin" className="flex w-4 items-center justify-center border-x border-[#7d98a4]"><Caret /></button>
    <button type="button" aria-label="Indicateurs" className="flex w-[30px] items-center justify-center bg-white">
      <Ico>
        <path d="M1 8c4-8 6-4 9 1s6 4 11 0" stroke="#1a1" />
        <path d="M1 4c5 2 8 8 12 6s5-5 8-7" stroke="#555" />
        <path d="M1 10c4-3 8-1 11 0s5 2 9-4" stroke="#d33" />
        <path d="M1 20v-4h3v2h3v-3h4v2h3v-2h3v3h3v2z" fill="#18b030" />
        <path d="M5 20v-2h3v2zm8 0v-3h3v3z" fill="#e04040" />
      </Ico>
    </button>
    <button type="button" aria-label="Options d'indicateurs" className="flex w-[14px] items-center justify-center border-l border-[#b8c4c8] bg-[#f4f6f7]"><Caret /></button>
    <button type="button" className="flex w-[67px] items-center gap-1 bg-[#2a90d8] pl-[3px] text-white">
      <Ico w={16} h={16}>
        <path d="M13 3 3 8l10 5" stroke="#fff" strokeWidth="1.500" />
        <circle cx="13" cy="3" r="2.600" fill="#fff" /><circle cx="3" cy="8" r="2.600" fill="#fff" /><circle cx="13" cy="13" r="2.600" fill="#fff" />
      </Ico>
      Partager
    </button>
    <div className="flex w-[125px] items-center justify-around">
      <Ico>
        <path d="M3.500 1.500h7l3 3v11h-10z" fill="#fff" stroke="#9ab" />
        <path d="M7 7h12c2 0 2 1 2 2v5c0 2-1 2-2 2h-5l-4 4v-4H8c-2 0-2-1-2-2V9z" fill="#2f6fe0" />
        <path d="M9 11.500h9" stroke="#fff" strokeWidth="2" strokeDasharray="2 1.500" />
      </Ico>
      <Ico>
        <rect x="4.500" y="3.500" width="13" height="16" fill="#fff" stroke="#444" />
        <path d="M6 7h10M6 10h10M6 13h10M6 16h10" stroke="#333" strokeWidth="1.200" />
        <path d="M11 3h7v6z" fill="#e03a3a" /><path d="M11 20H4v-6z" fill="#1faa2a" />
      </Ico>
      <Ico>
        <path d="M3.500 3.500h8v3h-8zM6.500 7.500h5v3h-5zM5.500 11.500h6v3h-6zM3.500 15.500h8v3h-8z" fill="#4fe04f" stroke="#0a7a1a" />
        <path d="M11.500 3.500h5v3h-5zM11.500 7.500h7v3h-7zM11.500 11.500h4v3h-4zM11.500 15.500h6v3h-6z" fill="#ff7474" stroke="#b8202a" />
      </Ico>
      <Ico>
        <rect x="1.500" y="1.500" width="13" height="12" fill="#fff" stroke="#1a4a9a" /><path d="M1 3.500h14" stroke="#1a4a9a" strokeWidth="3" />
        <rect x="7.500" y="7.500" width="13" height="12" fill="#fff" stroke="#1a4a9a" /><path d="M7 9.500h14" stroke="#1a4a9a" strokeWidth="3" />
        <path d="m9 17 3-4 2 3 2-3 3 4" stroke="#d33" />
      </Ico>
      <Ico>
        <rect x="2.500" y="9.500" width="6" height="9" fill="#ff6a6a" stroke="#a22" />
        <rect x="12.500" y="3.500" width="6" height="13" fill="#4fe04f" stroke="#1a8a1a" /><path d="M15.500 1v19M5.500 7v14" stroke="#285" />
        <path d="m4 19 7-7c-1-3 1-5 4-5l-2 3 2 2 3-1c0 3-2 4-5 3l-7 6z" fill="#fff" stroke="#000" />
      </Ico>
    </div>
    <button type="button" aria-label="Replier" className="w-4 text-[18px] leading-none text-[#3c4a50]">«</button>
    <div className="my-[5px] flex flex-1 border border-[#6f8f9c]">
      <button type="button" aria-label="Gauche" className="flex w-[14px] items-center justify-center border-r border-[#6f8f9c] bg-[#b4d2de]">
        <svg width="4" height="8" viewBox="0 0 4 8"><path d="M4 0v8L0 4z" fill="#000" /></svg>
      </button>
      <div className="flex flex-1 justify-end">
        <div className="w-[47%] border-x border-[#6f8f9c] bg-linear-to-b from-[#bfdfea] to-[#9dbccb]" />
      </div>
      <button type="button" aria-label="Droite" className="flex w-[14px] items-center justify-center bg-[#b4d2de]">
        <svg width="4" height="8" viewBox="0 0 4 8"><path d="M0 0v8l4-4z" fill="#000" /></svg>
      </button>
    </div>
    <div className="flex w-[105px] items-center justify-around">
      <Magnifier faded />
      <Magnifier sign="-" />
      <Magnifier sign="+" />
      <Ico w={18}>
        <path d="M0 5.500h18v5H0z" fill="#fff" /><path d="M1 8h16" stroke="#111" strokeWidth="3" strokeDasharray="3 1" />
        <path d="M9 12v4" stroke="#1a5ad0" strokeWidth="2.500" /><path d="M5 14.500h8L9 19z" fill="#1a5ad0" />
      </Ico>
    </div>
  </div>
);

/* ---------- taskbar ---------- */

const apps = [
  ["Démarrer", <path d="m4 6 7-1v7H4zm8-1.200L20 4v8h-8zM4 13h7v7l-7-1zm8 0h8v8l-8-1z" fill="#fff" />],
  ["Rechercher", <><circle cx="14" cy="9" r="5.500" stroke="#fff" strokeWidth="1.300" /><path d="m10 13-7 7" stroke="#fff" strokeWidth="1.300" /></>],
  ["Vue des tâches", <><path d="M4.500 8.500h10v7h-10zM4 3v2.500h11V3M4 21v-2.500h11V21" stroke="#fff" strokeWidth="1.300" /><path d="M19 3v3m0 4v11" stroke="#fff" strokeWidth="1.300" /><path d="M17.500 6.500h3v3h-3z" fill="#fff" /></>],
  ["Word", <><path d="M6 2.500h16v19H6z" fill="#f2f6fc" stroke="#9db4d8" /><path d="M16 7h5m-5 3h5m-5 3h5m-5 3h5" stroke="#5a80c0" /><path d="M4 1h11v18L1 22z" fill="#3d67b4" /><path d="M4 2h10v4H3.500z" fill="#7fa2dc" /><path d="m4.500 8 1.500 7 2.500-6 2 6L12 7.500" stroke="#fff" strokeWidth="1.600" /></>],
  ["Bureau", <><path d="M4 1h16v15H4z" fill="#1590dc" /><path d="M1 13h3v5H2zm19 0h3l-1 5h-2z" fill="#0a60a8" /><path d="M4 14h16v5H4z" fill="#0a6ab8" /><path d="M8 3h8v19l-2 1H8z" fill="#20b0f4" /><path d="M10 5h4" stroke="#0a60a8" /></>],
  ["Imprimante", <><path d="M6 5h12v6H6z" fill="#f4f4f4" /><path d="M1 8h15l7 4v7H5l-4-2z" fill="#c4c9cc" /><path d="M1 8h15l6 4H7z" fill="#eceeef" /><path d="M9 14h12v4H9z" fill="#fafafa" /><path d="M2 12h4" stroke="#777" /></>],
  ["Store", <><path d="M7 6V2.500h9V6" stroke="#2a9ae0" strokeWidth="2" /><path d="M1 6h21v14c0 2-1 2-2 2H3c-1 0-2 0-2-2z" fill="#f6f6f6" /><path d="M7 9h4v4H7z" fill="#e8502a" /><path d="M12 9h4v4h-4z" fill="#7ab82a" /><path d="M7 14h4v4H7z" fill="#2a9ae0" /><path d="M12 14h4v4h-4z" fill="#f8b82a" /></>],
  ["Spotify", <><circle cx="12" cy="12" r="11" fill="#1ed760" /><path d="M5.500 8.500c5-1.500 9-1 13 1M6 12.500c4-1.300 8-1 11.500 1M7 16c3.500-1 6-.7 9 .8" stroke="#0c1a10" strokeWidth="2" strokeLinecap="round" /></>],
  ["Paint", <><path d="M11 5c7 0 11 4 9 8-1 3-5 0-6 3s-2 6-6 5c-5-1-7-5-6-9 1-4 4-7 9-7z" fill="#d4e4f0" /><circle cx="7" cy="10" r="2" fill="#e84a3a" /><circle cx="12" cy="8" r="1.800" fill="#4ac04a" /><circle cx="6" cy="15" r="2" fill="#3a80e0" /><circle cx="16" cy="10" r="1.800" fill="#f0c020" /><path d="M20 2 14 22" stroke="#b87838" strokeWidth="2.500" /><path d="m18 1 5 1-2 5-3-1z" fill="#c8a070" /></>],
  ["Explorateur", <><path d="M1 3h8l2 3h11v14H1z" fill="#e8b030" /><path d="M1 7h21v14H1z" fill="#ffd866" /><path d="M5 13h13v8h-3v-4H8v4H5z" fill="#3a8ad0" /></>],
  ["Calculatrice", <><path d="M3 1h17v22H3z" fill="#4a6072" /><path d="M5 3h13v4H5z" fill="#6ad8f0" /><path d="M5 9h3v3H5zm5 0h3v3h-3zm5 0h3v3h-3zM5 14h3v3H5zm5 0h3v3h-3zM5 19h3v2.500H5zm5 0h3v2.500h-3z" fill="#e8eef2" /><path d="M15 14h3v7.500h-3z" fill="#2a6ad0" /></>],
  ["Chrome", <><circle cx="12" cy="12" r="11" fill="#fbc02d" /><path d="M2.500 6.500A11 11 0 0 1 21.500 6.500H12L7.500 15z" fill="#e33b2e" /><path d="M2.500 6.500 7.500 15l4.500 2-2 6A11 11 0 0 1 2.500 6.500z" fill="#1e9e48" /><circle cx="12" cy="12" r="5.500" fill="#fff" /><circle cx="12" cy="12" r="4.300" fill="#2a78e4" /></>],
  ["ProRealTime", <><path d="M6.500 8v15M17.500 0v23" stroke="#2a8a3a" /><path d="M3 10h7v10H3z" fill="#f06060" stroke="#a02a2a" /><path d="M14 4h7v15h-7z" fill="#4fe04f" stroke="#1a8a1a" /></>],
];

const Taskbar = () => (
  <footer className="flex h-10 items-stretch bg-[#101010] text-white">
    {apps.map(([name, art], i) => (
      <button
        key={name}
        type="button"
        title={name}
        aria-label={name}
        className={`flex items-center justify-center border-b-2 ${i === 0 ? "w-[47px]" : "w-[49px]"} ${i > 10 ? "border-[#a8a8a8]" : "border-transparent"} ${i === 12 ? "bg-[#383838]" : ""}`}
      >
        <svg width="24" height="24" viewBox="0 0 24 24" fill="none">{art}</svg>
      </button>
    ))}
    <div className="ml-auto flex flex-col items-center justify-center px-[6px] font-['Open_Sans','Noto_Sans',sans-serif] text-[11px] leading-[18px]">
      <span>13:49</span>
      <span>03/05/2023</span>
    </div>
  </footer>
);

const App = () => (
  <div className="flex min-h-screen flex-col bg-white font-['Liberation_Sans',Arial,sans-serif] text-[11px] text-black">
    <TopMenu />
    <DrawingBar />
    <TitleBar />
    <AccountBar />
    <main className="flex-1">
      <LegendBar />
      <PriceChart />
    </main>
    <ChartFooter />
    <Taskbar />
  </div>
);

export default App;
